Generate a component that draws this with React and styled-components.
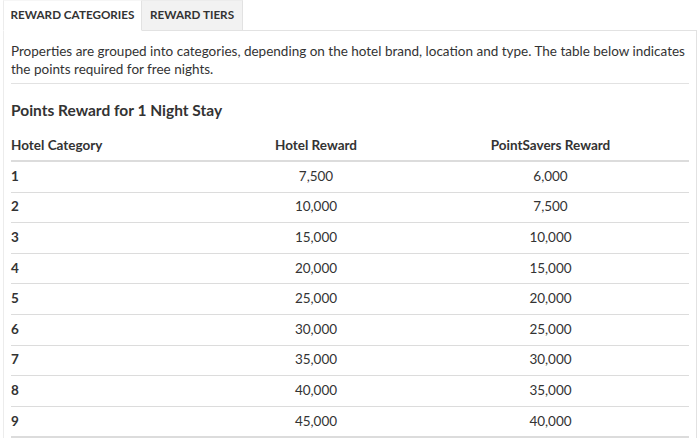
import React from 'react';
import styled, { createGlobalStyle } from 'styled-components';

const GlobalStyle = createGlobalStyle`
  html, body {
    margin: 0;
    padding: 0;
    background: #ffffff;
  }
  body {
    font-family: Lato, 'Open Sans', 'Liberation Sans', sans-serif;
    color: #333;
  }
`;

const rows = [
  ['1', '7,500', '6,000'],
  ['2', '10,000', '7,500'],
  ['3', '15,000', '10,000'],
  ['4', '20,000', '15,000'],
  ['5', '25,000', '20,000'],
  ['6', '30,000', '25,000'],
  ['7', '35,000', '30,000'],
  ['8', '40,000', '35,000'],
  ['9', '45,000', '40,000'],
];

const App = () => {
  return (
    <>
      <GlobalStyle />
      <Wrapper>
        <Tabs>
          <Tab active>REWARD CATEGORIES</Tab>
          <Tab>REWARD TIERS</Tab>
          <TabFiller />
        </Tabs>
        <Panel>
          <Intro>
            Properties are grouped into categories, depending on the hotel brand, location and type. The table below indicates the points required for free nights.
          </Intro>
          <Heading>Points Reward for 1 Night Stay</Heading>
          <Table>
            <colgroup>
              <col style={{ width: 209 }} />
              <col style={{ width: 192 }} />
              <col />
            </colgroup>
            <thead>
              <tr>
                <Th>Hotel Category</Th>
                <Th center>Hotel Reward</Th>
                <Th center>PointSavers Reward</Th>
              </tr>
            </thead>
            <tbody>
              {rows.map((r) => (
                <tr key={r[0]}>
                  <Td bold>{r[0]}</Td>
                  <Td center>{r[1]}</Td>
                  <Td center>{r[2]}</Td>
                </tr>
              ))}
            </tbody>
          </Table>
        </Panel>
      </Wrapper>
    </>
  );
};

const Wrapper = styled.div`
  width: 694px;
  margin-left: 3px;
`;

const Tabs = styled.div`
  display: flex;
  height: 30px;
`;

const Tab = styled.div`
  display: flex;
  align-items: center;
  justify-content: center;
  width: ${(p) => (p.active ? '139px' : '101px')};
  padding-bottom: 4px;
  font-size: 11.7px;
  font-weight: 700;
  color: #333;
  background: ${(p) => (p.active ? '#fff' : '#f2f2f2')};
  border-right: 1px solid #e2e2e2;
  border-left: ${(p) => (p.active ? '1px solid #ececec' : 'none')};
  border-bottom: ${(p) => (p.active ? '1px solid #fff' : '1px solid #e2e2e2')};
  border-top: 1px solid ${(p) => (p.active ? '#f6f6f6' : '#ececec')};
  box-sizing: border-box;
  height: 31px;
`;

const TabFiller = styled.div`
  flex: 1;
  border-bottom: 1px solid #e2e2e2;
  height: 31px;
  box-sizing: border-box;
`;

const Panel = styled.div`
  border-left: 1px solid #ececec;
  border-right: 1px solid #e2e2e2;
  padding: 12px 7px 0 7px;
`;

const Intro = styled.p`
  margin: 0;
  font-size: 13.5px;
  line-height: 18px;
  padding-bottom: 5px;
  border-bottom: 1px solid #e2e2e2;
`;

const Heading = styled.h3`
  margin: 0;
  padding: 16px 0 0;
  font-size: 15.5px;
  font-weight: 700;
  line-height: 20px;
`;

const Table = styled.table`
  width: 100%;
  border-collapse: collapse;
  margin-top: 16px;
  table-layout: fixed;
`;

const Th = styled.th`
  font-size: 13.5px;
  font-weight: 700;
  text-align: ${(p) => (p.center ? 'center' : 'left')};
  padding: 0 0 6px;
  line-height: 18px;
  border-bottom: 2px solid #dcdcdc;
`;

const Td = styled.td`
  font-size: 13.5px;
  font-weight: ${(p) => (p.bold ? 700 : 400)};
  text-align: ${(p) => (p.center ? 'center' : 'left')};
  height: 27.6px;
  line-height: 18px;
  vertical-align: middle;
  padding: 0 0 2px;
  border-bottom: 1px solid #dcdcdc;
  tr:last-child & {
    border-bottom: 2px solid #dcdcdc;
  }
`;

export default App;
